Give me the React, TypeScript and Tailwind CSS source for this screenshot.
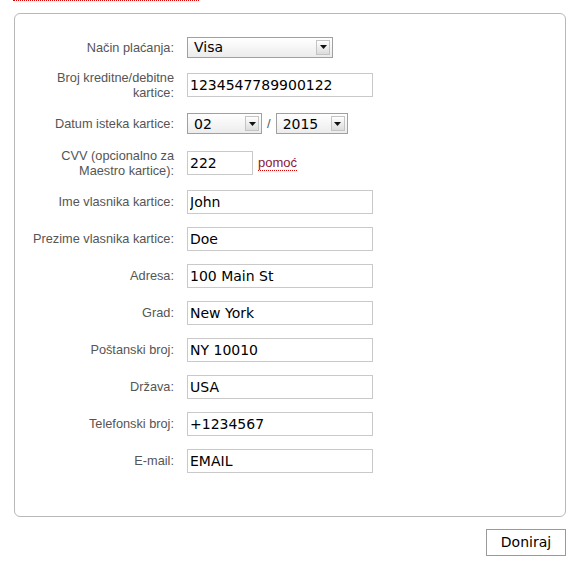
import React from 'react';

const labelCls = "w-[159px] shrink-0 text-right text-[12.75px] leading-[15px] text-[#555] font-['Liberation_Sans',Arial,sans-serif]";
const inputCls = "h-[24px] border border-[#c9c9c9] bg-white px-[2px] text-[14px] text-black font-['DejaVu_Sans',Verdana,sans-serif] outline-none";

const FakeSelect: React.FC<{ value: string; width: string }> = ({ value, width }) => (
    <div className={`${width} h-[21px] flex items-center border border-[#a0a0a0] bg-gradient-to-b from-white to-[#ececec] pl-[6px] pr-[2px]`}>
        <span className="flex-1 text-[14px] leading-none text-black font-['DejaVu_Sans',Verdana,sans-serif]">{value}</span>
        <span className="w-[14px] h-[15px] flex items-center justify-center border border-[#c4c4c4] bg-gradient-to-b from-white to-[#dcdcdc]">
            <svg width="7" height="4" viewBox="0 0 7 4">
                <path d="M0 0 L7 0 L3.5 4 Z" fill="#111" />
            </svg>
        </span>
    </div>
);

const Row: React.FC<{ label: React.ReactNode; h?: string; children: React.ReactNode }> = ({ label, h = 'h-[37px]', children }) => (
    <div className={`flex items-center ${h}`}>
        <div className={labelCls}>{label}</div>
        <div className="ml-[13px] flex items-center">{children}</div>
    </div>
);

const fields: [string, string, boolean?][] = [
    ['Ime vlasnika kartice:', 'John'],
    ['Prezime vlasnika kartice:', 'Doe'],
    ['Adresa:', '100 Main St'],
    ['Grad:', 'New York', true],
    ['Poštanski broj:', 'NY 10010'],
    ['Država:', 'USA'],
    ['Telefonski broj:', '+1234567'],
    ['E-mail:', 'EMAIL'],
];

export default function App() {
    return (
        <div className="w-[587px] h-[569px] bg-white overflow-hidden">
            <div className="ml-[13px] w-[186px] border-t border-dotted border-[#e00000]" />
            <div className="ml-[14px] mt-[12px] w-[552px] border border-[#b8b8b8] rounded-[6px] pt-[14px] pb-[37px]">
                <Row label="Način plaćanja:" h="h-[38px]">
                    <FakeSelect value="Visa" width="w-[146px]" />
                </Row>
                <Row label={<>Broj kreditne/debitne<br />kartice:</>} h="h-[38px]">
                    <input readOnly value="1234547789900122" className={`${inputCls} w-[186px]`} />
                </Row>
                <Row label="Datum isteka kartice:" h="h-[39px]">
                    <FakeSelect value="02" width="w-[75px]" />
                    <span className="mx-[5px] text-[13px] text-[#555] font-['Liberation_Sans',Arial,sans-serif]">/</span>
                    <FakeSelect value="2015" width="w-[72px]" />
                </Row>
                <Row label={<>CVV (opcionalno za<br />Maestro kartice):</>} h="h-[40px]">
                    <input readOnly value="222" className={`${inputCls} w-[66px]`} />
                    <a href="#" className="ml-[5px] text-[13px] text-[#8e1538] no-underline border-b border-dotted border-[#d00] leading-[14px] font-['Liberation_Sans',Arial,sans-serif]">pomoć</a>
                </Row>
                {fields.map(([label, value, focused]) => (
                    <Row key={label} label={label}>
                        <input
                            readOnly
                            value={value}
                            className={`${inputCls} w-[186px] ${focused ? 'border-[#8f8f8f]' : ''}`}
                        />
                    </Row>
                ))}
            </div>
            <div className="w-[566px] flex justify-end mt-[12px]">
                <button className="w-[80px] h-[27px] border border-[#9a9a9a] bg-white text-[14px] text-black font-['DejaVu_Sans',Verdana,sans-serif]">
                    Doniraj
                </button>
            </div>
        </div>
    );
}
